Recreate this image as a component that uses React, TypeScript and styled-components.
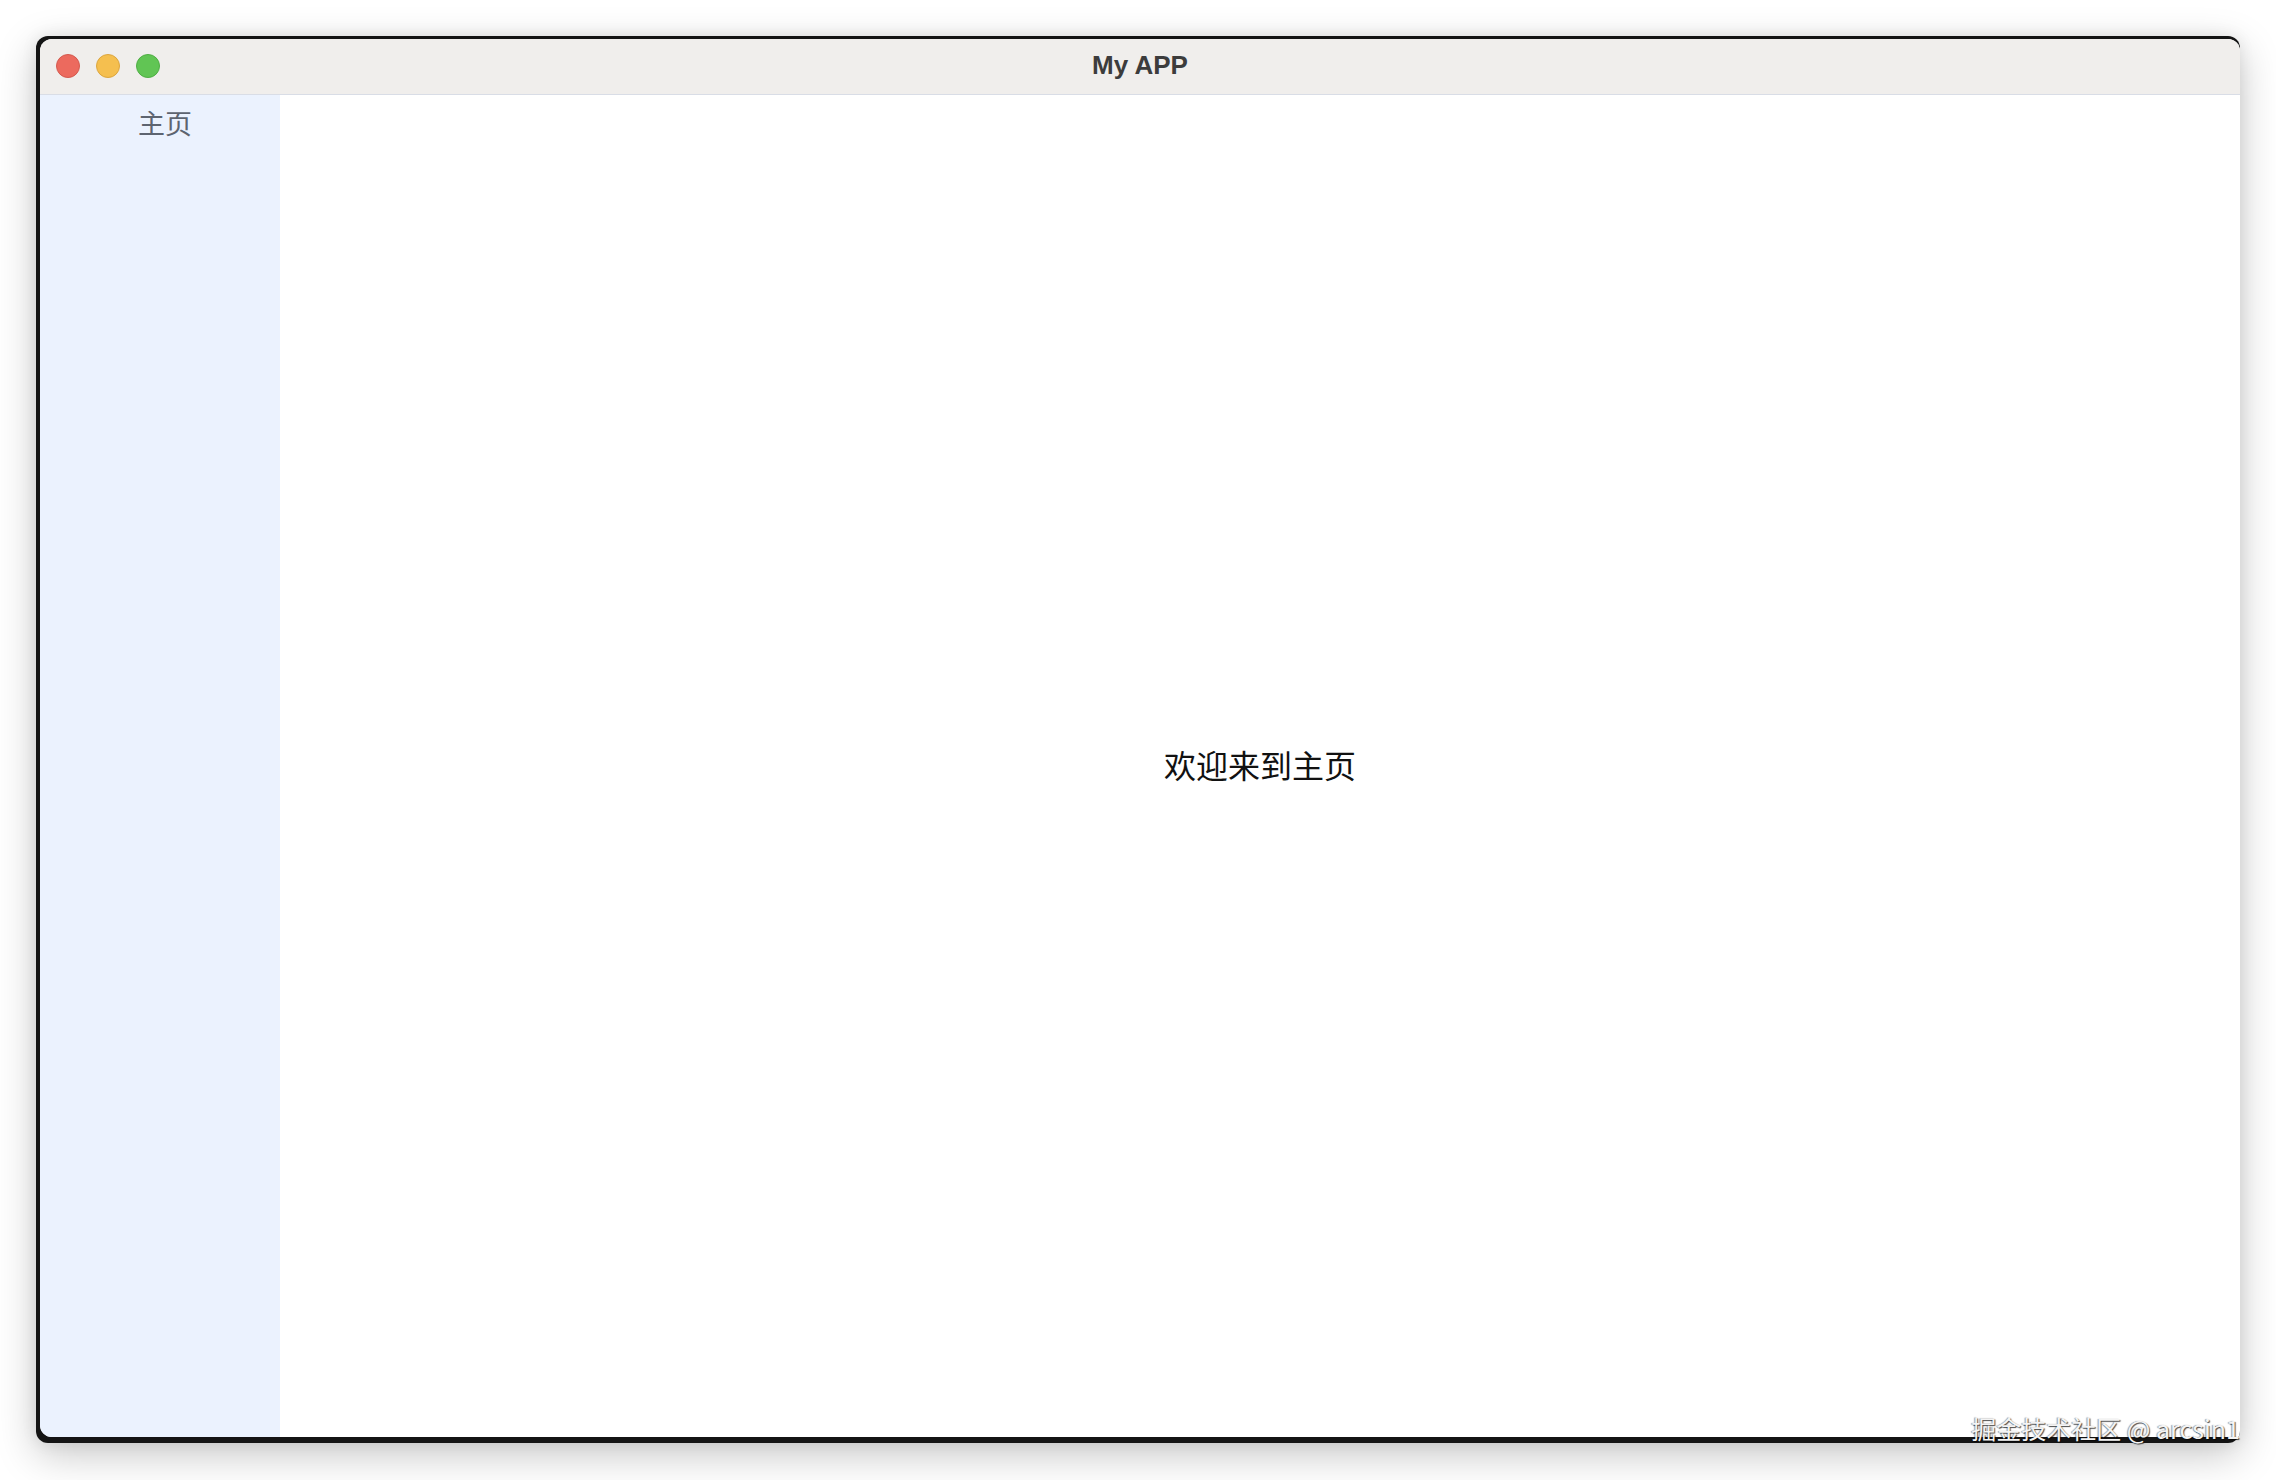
import styled, { createGlobalStyle } from "styled-components";

const GlobalStyle = createGlobalStyle`
  html, body {
    margin: 0;
    padding: 0;
    background: #ffffff;
  }
  body {
    font-family: "Inter", "Noto Sans CJK SC", sans-serif;
  }
`;

const Page = styled.div`
  position: relative;
  width: 2276px;
  height: 1480px;
  padding: 36px 0 0 36px;
  box-sizing: border-box;
`;

const Frame = styled.div`
  width: 2204px;
  height: 1407px;
  box-sizing: border-box;
  padding: 3px 0 6px 4px;
  background: #141414;
  border-radius: 12px;
  overflow: hidden;
  box-shadow: 0 12px 40px rgba(0, 0, 0, 0.22), 0 0 16px rgba(0, 0, 0, 0.08);
`;

const Window = styled.div`
  display: flex;
  flex-direction: column;
  height: 100%;
  background: #ffffff;
  border-radius: 12px 12px 0 12px;
  overflow: hidden;
`;

const TitleBar = styled.div`
  position: relative;
  display: flex;
  align-items: center;
  justify-content: center;
  height: 55px;
  flex-shrink: 0;
  background: #f0eeec;
  border-bottom: 1px solid #d9dde6;
`;

const Lights = styled.div`
  position: absolute;
  left: 16px;
  top: 15px;
  display: flex;
  gap: 16px;
`;

const Light = styled.span<{ color: string; edge: string }>`
  width: 24px;
  height: 24px;
  border-radius: 50%;
  box-sizing: border-box;
  background: ${(p) => p.color};
  border: 1px solid ${(p) => p.edge};
`;

const Title = styled.div`
  font-family: "Liberation Sans", Arial, sans-serif;
  font-weight: bold;
  font-size: 26px;
  color: #3c3c3c;
  margin-top: -2px;
`;

const Body = styled.div`
  display: flex;
  flex: 1;
  min-height: 0;
`;

const Sidebar = styled.nav`
  width: 240px;
  flex-shrink: 0;
  background: #ebf2fe;
  padding: 10px 0 0 10px;
  box-sizing: border-box;
  display: flex;
  flex-direction: column;
  align-items: center;
`;

const NavItem = styled.div`
  font-family: "Noto Sans CJK SC", sans-serif;
  font-size: 27px;
  line-height: 36px;
  color: #5d6470;
`;

const Main = styled.main`
  flex: 1;
  display: flex;
  align-items: center;
  justify-content: center;
`;

const Welcome = styled.div`
  font-family: "Noto Sans CJK SC", sans-serif;
  font-size: 32px;
  color: #111111;
  margin-top: -4px;
`;

const Watermark = styled.div`
  position: absolute;
  right: 36px;
  bottom: 37px;
  font-family: "Noto Sans CJK SC", "Liberation Sans", sans-serif;
  font-size: 25px;
  line-height: 30px;
  color: #f4f4f4;
  text-shadow: 1px 1px 1px rgba(0, 0, 0, 0.7), -1px 0 1px rgba(0, 0, 0, 0.4);
  white-space: nowrap;
`;

export default function App() {
  return (
    <>
      <GlobalStyle />
      <Page>
        <Frame>
          <Window>
            <TitleBar>
              <Lights>
                <Light color="#ec6a5e" edge="#d45a4f" />
                <Light color="#f5bf4f" edge="#dca63f" />
                <Light color="#61c554" edge="#4fae44" />
              </Lights>
              <Title>My APP</Title>
            </TitleBar>
            <Body>
              <Sidebar>
                <NavItem>主页</NavItem>
              </Sidebar>
              <Main>
                <Welcome>欢迎来到主页</Welcome>
              </Main>
            </Body>
          </Window>
        </Frame>
        <Watermark>掘金技术社区 @ arcsin1</Watermark>
      </Page>
    </>
  );
}
